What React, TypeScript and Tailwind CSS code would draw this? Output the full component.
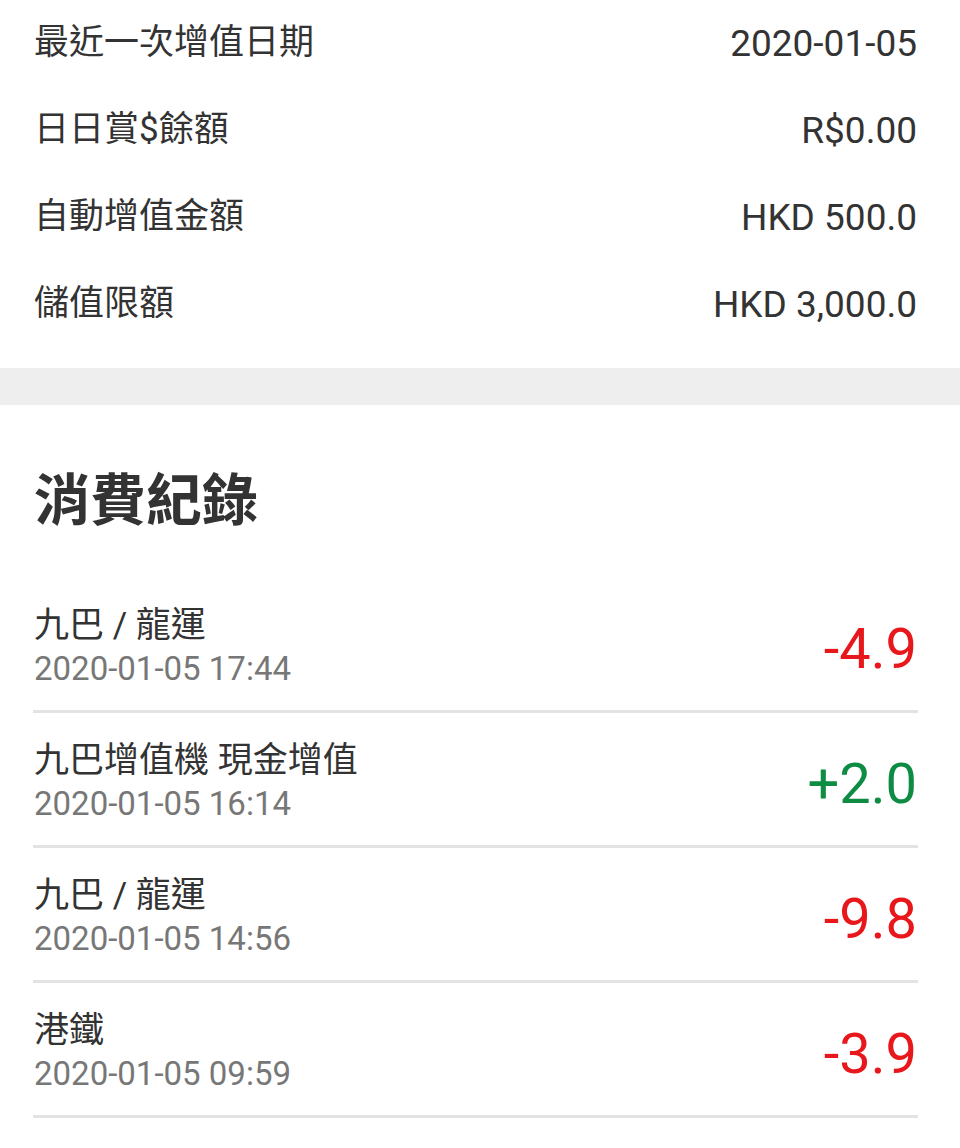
const FONT = "font-['Roboto','Noto_Sans_CJK_TC','Noto_Sans_CJK_SC',sans-serif]"

interface InfoRow {
  label: string
  value: string
}

const INFO: InfoRow[] = [
  { label: "最近一次增值日期", value: "2020-01-05" },
  { label: "日日賞$餘額", value: "R$0.00" },
  { label: "自動增值金額", value: "HKD 500.0" },
  { label: "儲值限額", value: "HKD 3,000.0" },
]

interface Txn {
  title: string
  time: string
  amount: string
  credit?: boolean
}

const TXNS: Txn[] = [
  { title: "九巴 / 龍運", time: "2020-01-05 17:44", amount: "-4.9" },
  { title: "九巴增值機 現金增值", time: "2020-01-05 16:14", amount: "+2.0", credit: true },
  { title: "九巴 / 龍運", time: "2020-01-05 14:56", amount: "-9.8" },
  { title: "港鐵", time: "2020-01-05 09:59", amount: "-3.9" },
]

export default function App() {
  return (
    <div className={`${FONT} min-h-[1148px] w-[960px] bg-white text-[#333333]`}>
      {/* Card summary */}
      <div className="pl-[34px] pr-[43px] pb-[20px]">
        {INFO.map((row) => (
          <div key={row.label} className="flex h-[87px] items-center justify-between">
            <span className="text-[35px]">{row.label}</span>
            <span className="text-[37px]">{row.value}</span>
          </div>
        ))}
      </div>

      <div className="h-[37px] bg-[#eeeeee]" />

      {/* Transaction history */}
      <div className="pl-[33px] pr-[42px] pt-[64px]">
        <h2 className="mb-[45px] pl-[1px] text-[56px] font-bold leading-[64px] text-[#333333]">消費紀錄</h2>

        {TXNS.map((t, i) => (
          <div
            key={i}
            className="flex items-center justify-between border-b-[3px] border-[#e3e3e3] pt-[28px] pb-[18px]"
          >
            <div className="flex flex-col pl-[1px]">
              <span className="text-[35px] leading-[40px]">{t.title}</span>
              <span className="text-[33px] leading-[46px] text-[#777777]">{t.time}</span>
            </div>
            <span
              className={`pr-[1px] text-[56px] leading-none ${t.credit ? "text-[#0f8c43]" : "text-[#e8171c]"}`}
            >
              {t.amount}
            </span>
          </div>
        ))}
      </div>
    </div>
  )
}
